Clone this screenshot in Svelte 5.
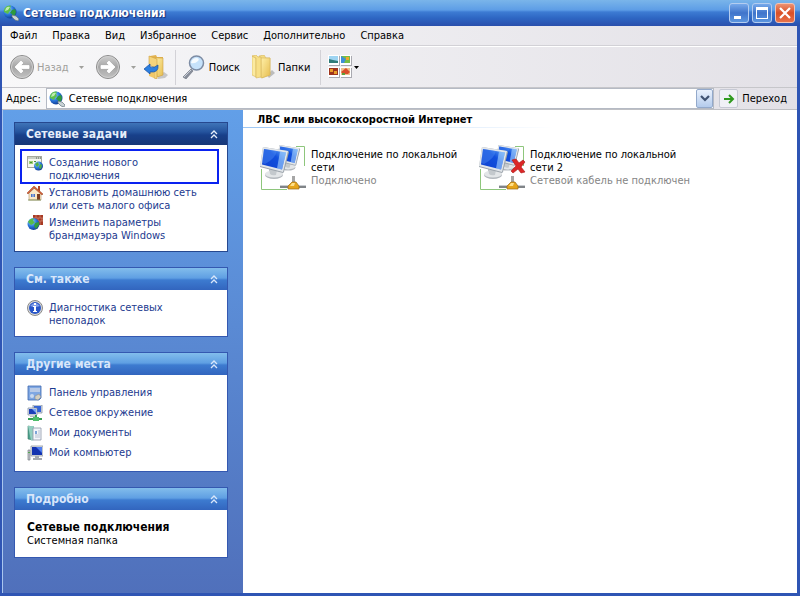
<script lang="ts">
    interface Link {
        icon: string;
        text: string;
        marked?: boolean;
    }

    interface Panel {
        title: string;
        primary?: boolean;
        links: Link[];
    }

    const menu = ["Файл", "Правка", "Вид", "Избранное", "Сервис", "Дополнительно", "Справка"];

    const panels: Panel[] = [
        {
            title: "Сетевые задачи",
            primary: true,
            links: [
                { icon: "create", text: "Создание нового подключения", marked: true },
                { icon: "home", text: "Установить домашнюю сеть или сеть малого офиса" },
                { icon: "firewall", text: "Изменить параметры брандмауэра Windows" },
            ],
        },
        {
            title: "См. также",
            links: [{ icon: "info", text: "Диагностика сетевых неполадок" }],
        },
        {
            title: "Другие места",
            links: [
                { icon: "control", text: "Панель управления" },
                { icon: "network", text: "Сетевое окружение" },
                { icon: "documents", text: "Мои документы" },
                { icon: "computer", text: "Мой компьютер" },
            ],
        },
        { title: "Подробно", links: [] },
    ];

    const connections = [
        { name: "Подключение по локальной сети", status: "Подключено", broken: false },
        { name: "Подключение по локальной сети 2", status: "Сетевой кабель не подключен", broken: true },
    ];

    let address = $state("Сетевые подключения");
    let collapsed = $state<Record<string, boolean>>({});
</script>

{#snippet globe()}
    <svg class="icon16" viewBox="0 0 16 16" aria-hidden="true">
        <circle cx="7" cy="7" r="6.500" fill="url(#g-globe)" />
        <path d="M2 3c2-2.500 5-3 6-2l-1 2 1 2-2 2-1 2-2-1-2-1c0-2 0-3 1-4z" fill="#5cc04a" />
        <path d="M9 5l3-1 1 3-1 3-2 2-1-3-2-1z" fill="#2e9a3d" />
        <path d="M3 3q2-2 4-1L5 5 2 6z" fill="#d6f5c8" opacity=".8" />
        <path d="M9 10l4 1 3 3-1 2-3-1-3-3z" fill="#c9d3d6" stroke="#64767e" stroke-width=".7" />
    </svg>
{/snippet}

{#snippet caret()}
    <svg class="caret" viewBox="0 0 5 3" aria-hidden="true"><path d="M0 0h5L2.500 3z" fill="currentColor" /></svg>
{/snippet}

{#snippet roundArrow(flip: boolean)}
    <svg class="icon26" viewBox="0 0 26 26" aria-hidden="true">
        <circle cx="13" cy="13" r="11.500" fill="url(#g-round)" stroke="#8c8c8c" />
        <circle cx="13" cy="13" r="10.500" fill="none" stroke="#cfcfcf" />
        <path
            d="M6 13l6-6 2 2-2.500 2.500H20v3h-8.500L14 17l-2 2z"
            fill="#fff"
            stroke="#fff"
            stroke-width=".8"
            transform={flip ? "matrix(-1 0 0 1 26 0)" : undefined}
        />
    </svg>
{/snippet}

{#snippet monitor()}
    <path d="M9 21l8 2 1 5H9z" fill="#b4b9be" />
    <ellipse cx="14" cy="28" rx="9" ry="4" fill="#b3b8bd" />
    <ellipse cx="14" cy="27" rx="9" ry="3.500" fill="#e3e6e8" />
    <path d="M9 21l8 2-1 5q-4 1-6-1z" fill="#c4c9cd" />
    <path d="M3 0l25 4 1 1-5 20-1 1L0 20z" fill="#9aa2aa" />
    <path d="M3 0l25 4-5 21L0 19z" fill="#e2e6ea" />
    <path d="M4 2l22 3.500-4 17L2 17.500z" fill="url(#g-screen)" />
    <path d="M4 2l13 2q-2 8-12 13l-3-1z" fill="#5e9ffa" opacity=".35" />
    <path d="M20 4.500l6 1-4 17-5-1z" fill="#a9d6ff" opacity=".6" />
{/snippet}

{#snippet linkIcon(kind: string)}
    <svg class="icon16" viewBox="0 0 16 16" aria-hidden="true">
        {#if kind === "create"}
            <rect x=".5" y="1.500" width="14" height="11" fill="#f6f6ee" stroke="#a5a89c" />
            <path d="M1 2h13v2H1z" fill="#c9cec4" />
            <path d="M9 3h1m1 0h1m1 0h1" stroke="#59615a" />
            <path d="M2 6h4v3H2z" fill="#9fcf72" />
            <path d="M3 7h2v1H3zM7 6h2v1H7z" fill="#4b8e38" />
            <circle cx="11.500" cy="11" r="4.500" fill="url(#g-globe)" />
            <path d="M8 9l3-2 1 3-2 2zM13 9l2 1-1 4-2-1z" fill="#4fae43" />
        {:else if kind === "home"}
            <path d="M11 1h2v5h-2z" fill="#b84b2a" />
            <path d="M2 8l6-5 6 5v7H2z" fill="#fbe9c8" stroke="#b39267" stroke-width=".6" />
            <path d="M0 8l7-7 9 8-1 1-8-7-6 6z" fill="#d8613a" stroke="#93401f" stroke-width=".5" />
            <path d="M10 9h3v6h-3z" fill="#7e3f22" />
            <path d="M4 9h4v3H4z" fill="#4d76c4" />
            <path d="M6 9v3" stroke="#fff" stroke-width=".7" />
            <path d="M1 15h13" stroke="#8a9a6a" />
        {:else if kind === "firewall"}
            <path d="M6 0h10v10H6z" fill="#a83a24" />
            <path d="M6 3h10M6 6h10M9 0v3M13 0v3M11 3v3M15 3v3M13 6v4" stroke="#d08a72" stroke-width=".7" />
            <circle cx="6.500" cy="9" r="6" fill="url(#g-globe)" />
            <path d="M1 7c1-2 3-4 6-3.500L6 6l2 1-2 2-2 1z" fill="#57bd4a" />
            <path d="M8 8l4-1v3l-3 4-2-3z" fill="#329c3d" />
        {:else if kind === "info"}
            <circle cx="8" cy="8" r="7.500" fill="#d9d9d9" stroke="#8a8a8a" />
            <circle cx="8" cy="8" r="6" fill="#2956c8" />
            <path d="M3 6q5-6 10 0-5 2-10 0z" fill="#7f9ee9" />
            <path d="M7 3h2v2H7zM6 6h3v5h1v1H6v-1h1V7H6z" fill="#fff" />
        {:else if kind === "control"}
            <path d="M1 1h13v12l-2 2H1z" fill="#7fa7e2" stroke="#3e67b0" stroke-width=".8" />
            <path d="M3 3h10v4H3z" fill="#dbe8fb" />
            <path d="M4 3v4M6 3v4M8 3v4M10 3v4M12 3v4" stroke="#7590c0" stroke-width=".7" />
            <circle cx="5" cy="11" r="2" fill="#c9d9ef" />
            <path d="M8 11l4-2 2 3-3 3-3-1z" fill="#d4cfc0" stroke="#80858a" stroke-width=".5" />
        {:else if kind === "network"}
            <path d="M6 0h9v8H6z" fill="#dde3ec" stroke="#77849a" stroke-width=".7" />
            <path d="M7 1h7v6H7z" fill="#3564d8" />
            <path d="M1 3h9v7H1z" fill="#e6eaf1" stroke="#77849a" stroke-width=".7" />
            <path d="M2 4h7v5H2z" fill="#1d3fb8" />
            <path d="M5 4l4 0v4z" fill="#79a5f7" />
            <path d="M3 11h5v1H3z" fill="#b5bac2" />
            <path d="M8 10h2v3H8zM1 13h14v2H1z" fill="#38a054" />
            <path d="M6 12h6v4H6z" fill="#4fbd6b" />
        {:else if kind === "documents"}
            <path d="M1 1l5 1v13l-5-1z" fill="#4fa28e" stroke="#377766" stroke-width=".6" />
            <path d="M1 1h6v14l-3 .500z" fill="#93cfc0" />
            <path d="M6 3h8v12H6z" fill="#f3f6fb" stroke="#8e98a8" stroke-width=".8" />
            <path d="M8 6h2v3H8z" fill="#7ca4d8" />
            <path d="M11 6h2M11 8h2M8 10h5M8 12h5" stroke="#a6b4c8" stroke-width=".8" />
        {:else}
            <path d="M1 5h2v10H1z" fill="#c3c7cc" stroke="#7c8188" stroke-width=".7" />
            <path d="M1 7h2v1H1z" fill="#51a650" />
            <path d="M4 1h12v10H4z" fill="#e4e6e9" stroke="#858b94" stroke-width=".7" />
            <path d="M5 2h10v8H5z" fill="#1433b0" />
            <path d="M9 2h6v6z" fill="#4f7df0" />
            <path d="M8 11h4v2h3v2H6v-2h2z" fill="#a5a9b0" />
        {/if}
    </svg>
{/snippet}

<svg class="defs" aria-hidden="true">
    <defs>
        <radialGradient id="g-globe" cx=".35" cy=".3" r=".8">
            <stop offset="0" stop-color="#9fdcff" />
            <stop offset=".5" stop-color="#2b78dc" />
            <stop offset="1" stop-color="#0c2f86" />
        </radialGradient>
        <linearGradient id="g-round" x1="0" y1="0" x2="0" y2="1">
            <stop offset="0" stop-color="#cfcfcf" />
            <stop offset=".5" stop-color="#a6a6a6" />
            <stop offset="1" stop-color="#c2c2c2" />
        </linearGradient>
        <linearGradient id="g-screen" x1="0" y1="1" x2="1" y2="0">
            <stop offset="0" stop-color="#0d3fd0" />
            <stop offset=".6" stop-color="#1150dd" />
            <stop offset="1" stop-color="#6fb3fb" />
        </linearGradient>
        <linearGradient id="g-folder" x1="0" y1="0" x2="1" y2="1">
            <stop offset="0" stop-color="#fff0a8" />
            <stop offset="1" stop-color="#e6bd50" />
        </linearGradient>
    </defs>
</svg>

<div class="window">
    <header class="titlebar">
        {@render globe()}
        <h1>Сетевые подключения</h1>
        <div class="controls">
            <button class="control" aria-label="Свернуть">
                <svg viewBox="0 0 18 18"><path d="M4 12h7v3H4z" fill="#fff" /></svg>
            </button>
            <button class="control" aria-label="Развернуть">
                <svg viewBox="0 0 18 18"><path d="M3 3h12v12H3zM4 6v8h10V6z" fill="#fff" fill-rule="evenodd" /></svg>
            </button>
            <button class="control close" aria-label="Закрыть">
                <svg viewBox="0 0 18 18"><path d="M4 4l10 10M14 4L4 14" stroke="#fff" stroke-width="2.200" /></svg>
            </button>
        </div>
    </header>

    <div class="frame">
        <nav class="menubar">
            {#each menu as item}
                <button>{item}</button>
            {/each}
        </nav>

        <div class="toolbar">
            <button class="tool disabled" disabled>
                {@render roundArrow(false)}
                <span>Назад</span>
            </button>
            <button class="tool drop disabled" disabled aria-label="Журнал назад">{@render caret()}</button>
            <button class="tool disabled" disabled aria-label="Вперед">{@render roundArrow(true)}</button>
            <button class="tool drop disabled" disabled aria-label="Журнал вперед">{@render caret()}</button>
            <button class="tool up" aria-label="Вверх">
                <svg class="icon24" viewBox="0 0 24 24" aria-hidden="true">
                    <path d="M14 21l6-4 4 3-3 3-7 1z" fill="#999" opacity=".5" />
                    <path d="M6 1l6-1 1 2h6v18l-6 2z" fill="#e3b350" />
                    <path d="M11 3h8v17l-6 2z" fill="url(#g-folder)" stroke="#cfa348" stroke-width=".6" />
                    <path d="M5 1l8 3v20l-3-1V13L5 9z" fill="#f5d47c" stroke="#cf9f3d" stroke-width=".6" />
                    <path d="M5 14h5v9l-5-2z" fill="#f2c868" />
                    <path d="M0 14l6-5v3q5 1 8-2 1 8-8 7v2z" fill="#2c7fe0" stroke="#174f9f" stroke-width=".7" />
                </svg>
            </button>
            <span class="separator"></span>
            <button class="tool">
                <svg class="icon24" viewBox="0 0 24 24" aria-hidden="true">
                    <path d="M8 14l2 2-7 8-3-2z" fill="#898f9c" stroke="#686e7a" stroke-width=".6" />
                    <path d="M8 15L1 22" stroke="#cdd2da" />
                    <circle cx="13.500" cy="8" r="7" fill="#c6e2fb" stroke="#7d8ca4" stroke-width="1.500" />
                    <path d="M8 8q1-5 6-5 3 1 1 3-3 3-7 2z" fill="#f6fbff" />
                </svg>
                <span>Поиск</span>
            </button>
            <button class="tool folders">
                <svg class="icon24" viewBox="0 0 24 24" aria-hidden="true">
                    <path d="M15 20l5-5 3 3-6 5z" fill="#999" opacity=".6" />
                    <path d="M7 1l5-1 2 3h4v17l-8 3z" fill="#f3dc84" stroke="#d6b65a" stroke-width=".6" />
                    <path d="M9 3h9v17l-9 3z" fill="url(#g-folder)" stroke="#d6b65a" stroke-width=".6" />
                    <path d="M0 1l4 2v19l-4-2z" fill="#fbeaa0" stroke="#d6b65a" stroke-width=".6" />
                    <path d="M0 1l4-1 2 2h3v20l-5 1V3z" fill="#f7df87" stroke="#d6b65a" stroke-width=".6" />
                </svg>
                <span>Папки</span>
            </button>
            <span class="separator"></span>
            <button class="tool views" aria-label="Вид">
                <svg class="icon24" viewBox="0 0 24 24" aria-hidden="true">
                    <path d="M1 1h11v10H1zM13 1h11v10H13zM1 13h11v10H1zM13 13h11v10H13z" fill="#a9a9b0" />
                    <path d="M0 0h11v10H0zM12 0h11v10H12zM0 12h11v10H0zM12 12h11v10H12z" fill="#fff" />
                    <path d="M1 1h9v7H1z" fill="#9ed4f2" /><path d="M1 4l4 1 5 1v2H1z" fill="#2f7b78" />
                    <path d="M13 1h9v7h-9z" fill="#76bd45" /><path d="M13 1l5 3-2 4h-3z" fill="#3f8fd8" /><path d="M18 2h3v3h-3z" fill="#f0a52a" />
                    <path d="M1 13h9v7H1z" fill="#9f341c" /><path d="M2 14h3v3H2zM6 16h3v3H6z" fill="#e99d28" />
                    <path d="M13 13h9v7h-9z" fill="#f0c18c" /><path d="M13 17l5-4 4 4-2 2h-5z" fill="#d94f2a" /><path d="M14 18h3v2h-3z" fill="#5da03b" />
                </svg>
                {@render caret()}
            </button>
        </div>

        <div class="addressbar">
            <label for="address">Адрес:</label>
            <div class="combo">
                {@render globe()}
                <input id="address" type="text" bind:value={address} />
                <button class="combo-button" aria-label="Показать список адресов">
                    <svg viewBox="0 0 10 7" aria-hidden="true"><path d="M1 1l4 4 4-4" fill="none" stroke="#3f5272" stroke-width="2.200" /></svg>
                </button>
            </div>
            <button class="go">
                <span class="go-icon">
                    <svg viewBox="0 0 12 12" aria-hidden="true"><path d="M1 6h9M6 2l4 4-4 4" fill="none" stroke="#2f9a1e" stroke-width="2" /></svg>
                </span>
                Переход
            </button>
        </div>

        <div class="body">
            <aside class="sidebar">
                {#each panels as panel}
                    <section class="panel" class:primary={panel.primary}>
                        <button
                            class="panel-title"
                            aria-expanded={!collapsed[panel.title]}
                            onclick={() => (collapsed[panel.title] = !collapsed[panel.title])}
                        >
                            <span>{panel.title}</span>
                            <svg class="chevrons" viewBox="0 0 8 9" aria-hidden="true">
                                <path d="M1 4l3-3 3 3M1 8l3-3 3 3" fill="none" stroke="currentColor" stroke-width="1.300" />
                            </svg>
                        </button>
                        {#if !collapsed[panel.title]}
                            <div class="panel-body">
                                {#each panel.links as link}
                                    <a href="#{link.icon}" class="link" class:marked={link.marked}>
                                        {@render linkIcon(link.icon)}
                                        <span>{link.text}</span>
                                    </a>
                                {:else}
                                    <p class="details"><strong>Сетевые подключения</strong><br />Системная папка</p>
                                {/each}
                            </div>
                        {/if}
                    </section>
                {/each}
            </aside>

            <main class="content">
                <h2>ЛВС или высокоскоростной Интернет</h2>
                <div class="connections">
                    {#each connections as connection}
                        <a href="#connection" class="connection">
                            <svg class="icon48" viewBox="0 0 48 48" aria-hidden="true">
                                <path d="M37 3.500h8.500V23M2.500 26v20.500H28" fill="none" stroke="#8ec67c" />
                                <g transform="translate(18 2) scale(.8)">{@render monitor()}</g>
                                <g transform="translate(1 4)">{@render monitor()}</g>
                                <path d="M33 33h3v8h-3z" fill="#a6a6a6" />
                                <path d="M21 42h26v3H21z" fill="#808488" />
                                <path d="M21 42h26v1H21z" fill="#c9ccd0" />
                                <path d="M33 39h4l3 4v3h-11v-3z" fill="#e6a51c" stroke="#9c6b14" stroke-width=".7" />
                                <path d="M33 40h3l-1 3h-4z" fill="#ffe08a" />
                                {#if connection.broken}
                                    <path d="M34 17l4-1 3 4 4-3 2 2-4 5 4 5-4 1-3-4-5 4-2-2 5-5z" fill="#dc2727" stroke="#a81414" stroke-width=".6" />
                                {/if}
                            </svg>
                            <span class="connection-text">
                                {connection.name}
                                <small>{connection.status}</small>
                            </span>
                        </a>
                    {/each}
                </div>
            </main>
        </div>
    </div>
</div>

<style>
    :global(body) {
        margin: 0;
    }

    .defs {
        position: absolute;
        width: 0;
        height: 0;
    }

    .window {
        display: flex;
        flex-direction: column;
        box-sizing: border-box;
        min-height: 100vh;
        background: #2f55b4;
        font-family: "DejaVu Sans Condensed", "DejaVu Sans", sans-serif;
        font-size: 11px;
        line-height: 13px;
        color: #000;
    }

    button,
    input {
        padding: 0;
        border: none;
        background: none;
        font: inherit;
        color: inherit;
    }

    .icon16 {
        flex: none;
        width: 16px;
        height: 16px;
    }

    .icon24 {
        flex: none;
        width: 24px;
        height: 24px;
    }

    .icon26 {
        flex: none;
        width: 26px;
        height: 26px;
    }

    .icon48 {
        flex: none;
        width: 48px;
        height: 48px;
    }

    .caret {
        width: 5px;
        height: 3px;
    }

    .titlebar {
        display: flex;
        align-items: center;
        gap: 4px;
        height: 26px;
        padding: 0 5px 0 3px;
        background: linear-gradient(#7ab5ea 0, #5d9de6 10px, #3d7bd3 12px, #2e66c3 18px, #2a4fac 26px);
    }

    h1 {
        flex: 1;
        margin: 0;
        font-size: 12px;
        font-weight: bold;
        color: #fff;
        text-shadow: 1px 1px 1px #16307c;
    }

    .controls {
        display: flex;
        gap: 3px;
    }

    .control {
        display: flex;
        box-sizing: border-box;
        width: 20px;
        height: 20px;
        border: 1px solid #b4cdf0;
        border-radius: 3px;
        background: linear-gradient(#77a9ea, #3f74cb 50%, #5b95df);
    }

    .control.close {
        border-color: #f3c3b4;
        background: linear-gradient(#ec9273, #d94f26 50%, #e8724a);
    }

    .frame {
        display: flex;
        flex: 1;
        flex-direction: column;
        margin: 0 3px 3px 2px;
        background: linear-gradient(90deg, #f8f8f9, #e3e1e7);
    }

    .menubar {
        display: flex;
        align-items: center;
        gap: 15px;
        height: 19px;
        padding: 0 8px;
        border-bottom: 1px solid #d2d1d6;
    }

    .toolbar {
        display: flex;
        align-items: center;
        height: 40px;
        padding: 0 7px;
        border-top: 1px solid #fff;
        border-bottom: 1px solid #c6c6ca;
    }

    .tool {
        display: flex;
        align-items: center;
        gap: 2px;
    }

    .tool.disabled {
        color: #a0a09c;
    }

    .tool.drop {
        justify-content: center;
        width: 26px;
    }

    .up {
        margin-left: -3px;
    }

    .folders {
        margin-left: 12px;
    }

    .separator {
        width: 1px;
        height: 35px;
        margin: 0 7px;
        background: #d3d2d7;
    }

    .folders + .separator {
        margin-left: 10px;
    }

    .addressbar {
        display: flex;
        align-items: center;
        gap: 5px;
        height: 21px;
        padding: 0 10px 0 4px;
        border-bottom: 1px solid #bfc0c4;
    }

    .combo {
        display: flex;
        flex: 1;
        align-items: center;
        gap: 4px;
        box-sizing: border-box;
        height: 21px;
        padding-left: 2px;
        border: 1px solid #b5bac4;
        background: #fff;
    }

    .combo input {
        flex: 1;
        min-width: 0;
        outline: none;
    }

    .combo-button {
        display: flex;
        align-items: center;
        justify-content: center;
        box-sizing: border-box;
        width: 17px;
        height: 19px;
        border: 1px solid #93a9cb;
        border-radius: 2px;
        background: linear-gradient(#e9f1fd, #b4cbec);
    }

    .combo-button svg {
        width: 10px;
        height: 7px;
    }

    .go {
        display: flex;
        align-items: center;
        gap: 4px;
    }

    .go-icon {
        display: flex;
        align-items: center;
        justify-content: center;
        box-sizing: border-box;
        width: 19px;
        height: 19px;
        border: 1px solid #c6c9d4;
        border-radius: 2px;
        background: #f0f1f6;
    }

    .go-icon svg {
        width: 12px;
        height: 12px;
    }

    .body {
        display: flex;
        flex: 1;
        background: #fff;
    }

    .sidebar {
        display: flex;
        flex: none;
        flex-direction: column;
        gap: 15px;
        box-sizing: border-box;
        width: 241px;
        padding: 12px 15px 35px 11px;
        border-left: 1px solid #a9c6ef;
        background: linear-gradient(#629fe8, #5070bb);
    }

    .panel {
        border: 1px solid #3458b0;
        background: #fff;
    }

    .panel-title {
        display: flex;
        align-items: center;
        justify-content: space-between;
        box-sizing: border-box;
        width: 100%;
        height: 22px;
        padding: 0 9px 0 11px;
        background: linear-gradient(#82bdec 0, #5f9fe3 10px, #3d7bd0 12px, #3265be 22px);
        font-size: 12px;
        font-weight: bold;
        color: #d8e6fa;
    }

    .primary {
        border-color: #26488f;
    }

    .primary .panel-title {
        background: linear-gradient(#3f74b8 0, #24539d 9px, #18408a 12px, #173777 22px);
        color: #e6eefa;
    }

    .chevrons {
        width: 8px;
        height: 9px;
    }

    .panel-body {
        display: flex;
        flex-direction: column;
        gap: 4px;
        padding: 10px 12px;
    }

    .link {
        display: flex;
        position: relative;
        gap: 6px;
        min-height: 16px;
        color: #1c3a8f;
        text-decoration: none;
    }

    .link span {
        max-width: 156px;
        padding-top: 1px;
        margin-bottom: -1px;
    }

    .link.marked span {
        max-width: 110px;
    }

    /* frame drawn around the task to pick */
    .link.marked::after {
        content: "";
        position: absolute;
        inset: -6px -4px -3px -7px;
        border: 2px solid #0a22f0;
    }

    .details {
        margin: 1px 0 0;
    }

    .details strong {
        font-size: 12px;
    }

    .content {
        flex: 1;
        min-width: 0;
    }

    h2 {
        margin: 0;
        padding: 3px 14px 2px;
        background: linear-gradient(90deg, #9cc6f4, #fff 310px) no-repeat 0 100% / 100% 1px;
        font-size: 11px;
        font-weight: bold;
    }

    .connections {
        display: flex;
        flex-wrap: wrap;
        gap: 3px;
        padding: 15px 16px;
    }

    .connection {
        display: flex;
        gap: 4px;
        width: 216px;
        color: inherit;
        text-decoration: none;
    }

    .connection-text {
        flex: 1;
        padding-top: 5px;
    }

    .connection small {
        display: block;
        font-size: inherit;
        white-space: nowrap;
        color: #858585;
    }
</style>
